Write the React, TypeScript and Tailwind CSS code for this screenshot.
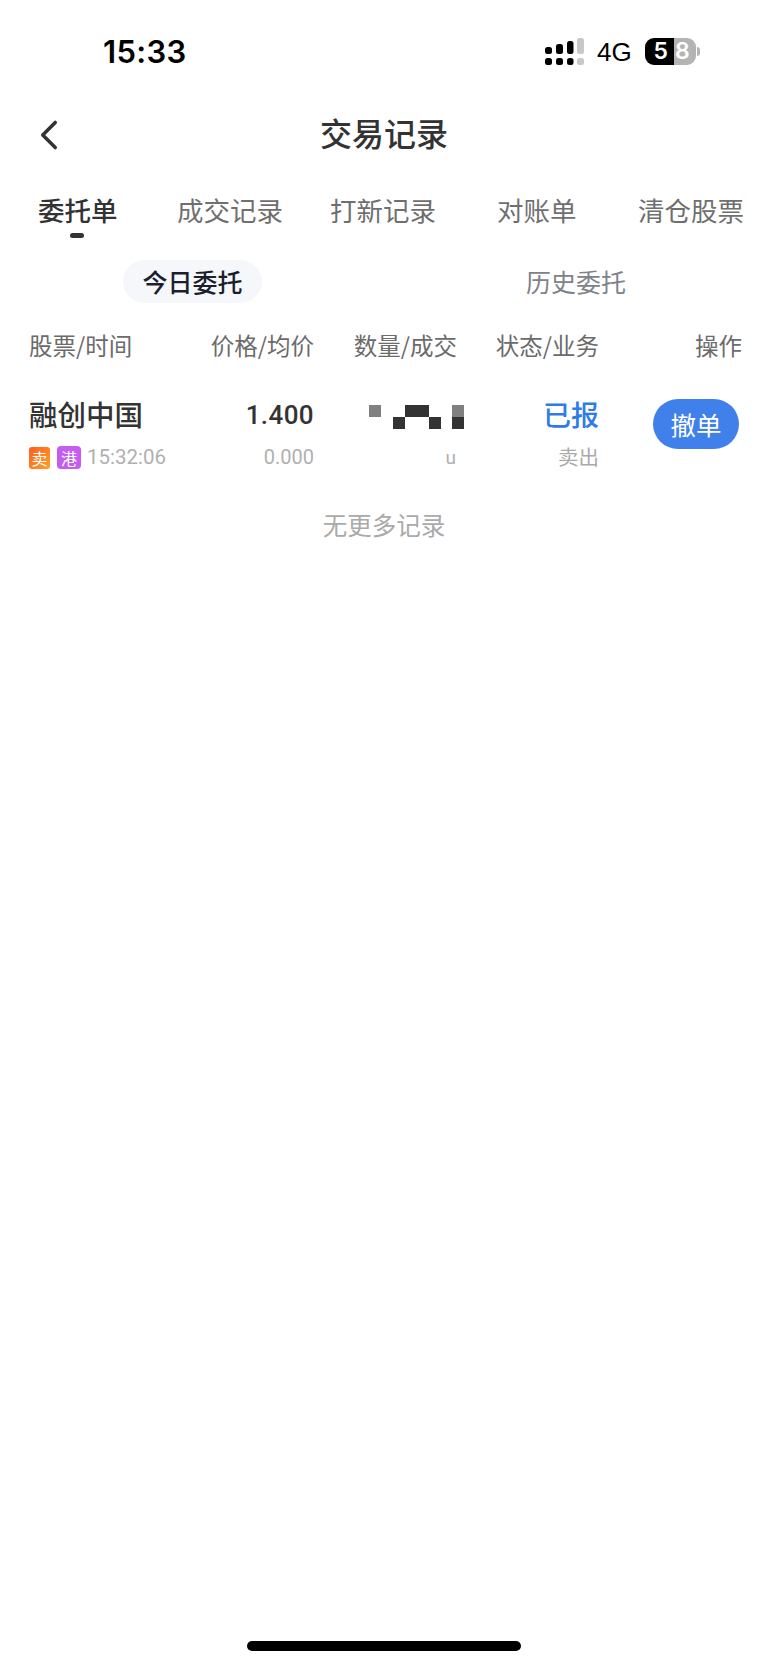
import { ChevronLeft } from "lucide-react";

const tabs = [
  { label: "委托单", className: "ml-[38px] w-[78px] text-[#333333] font-medium" },
  { label: "成交记录", className: "ml-[61px] w-[107px]" },
  { label: "打新记录", className: "ml-[46px] w-[107px]" },
  { label: "对账单", className: "ml-[60px] w-[80px]" },
  { label: "清仓股票", className: "ml-[61px] w-[107px]" },
];

const columns = ["价格/均价", "数量/成交", "状态/业务", "操作"];

function SignalIcon() {
  return (
    <svg width="39" height="27" viewBox="0 0 39 27">
      <rect x="0" y="9" width="7" height="7" rx="2.5" fill="#000" />
      <rect x="11" y="6" width="7" height="10" rx="2.5" fill="#000" />
      <rect x="22" y="3" width="6.5" height="13" rx="2.5" fill="#000" />
      <rect x="32" y="0" width="7" height="16" rx="2.5" fill="#c8c8c8" />
      <rect x="0" y="20" width="7" height="7" rx="2.5" fill="#000" />
      <rect x="11" y="20" width="7" height="7" rx="2.5" fill="#000" />
      <rect x="22" y="20" width="6.5" height="7" rx="2.5" fill="#000" />
      <rect x="32" y="20" width="7" height="7" rx="2.5" fill="#c8c8c8" />
    </svg>
  );
}

// pixelated quantity, it's blurred out in the original
function Mosaic() {
  return (
    <svg width="95" height="24" viewBox="0 0 95 24">
      <rect x="0" y="0" width="12" height="12" fill="#808080" />
      <rect x="36" y="0" width="24" height="12" fill="#333333" />
      <rect x="24" y="12" width="12" height="12" fill="#333333" />
      <rect x="60" y="12" width="12" height="12" fill="#333333" />
      <rect x="83" y="0" width="12" height="12" fill="#808080" />
      <rect x="83" y="12" width="12" height="12" fill="#333333" />
    </svg>
  );
}

export default function App() {
  return (
    <div className="relative flex h-[1665px] w-[768px] flex-col overflow-hidden bg-white font-['Noto_Sans_CJK_SC',sans-serif]">
      {/* Status bar */}
      <div className="flex h-[27px] mt-[38px] items-center">
        <span className="ml-[103px] font-['Inter',sans-serif] text-[31px] tracking-[0.3px] leading-none font-semibold text-black">
          15:33
        </span>
        <div className="ml-auto mr-[68px] flex items-center">
          <SignalIcon />
          <span className="ml-[13px] w-[35px] font-['Liberation_Sans',sans-serif] text-[26px] leading-none text-black">
            4G
          </span>
          <div className="ml-[13px] flex h-[27px] w-[51px] overflow-hidden rounded-[9px] font-['Inter',sans-serif] text-[23px] font-semibold text-white">
            <span className="flex w-[29px] items-center justify-end bg-black pr-[6px]">5</span>
            <span className="flex w-[22px] items-center bg-[#b4b4b4] pl-[1px]">8</span>
          </div>
          <div className="ml-[1px] h-[9px] w-[3px] rounded-r-full bg-[#b4b4b4]" />
        </div>
      </div>

      {/* Header */}
      <div className="relative mt-[50px] flex h-[40px] items-center justify-center">
        <ChevronLeft size={50} strokeWidth={1.7} className="absolute left-[24px] text-[#333333]" />
        <h1 className="pb-[6px] text-[32px] leading-none font-medium text-[#333333]">交易记录</h1>
      </div>

      {/* Tabs */}
      <div className="mt-[35px] flex h-[40px] items-center text-[26.5px] leading-none whitespace-nowrap text-[#6f6f6f]">
        {tabs.map((tab) => (
          <span key={tab.label} className={tab.className}>
            {tab.label}
          </span>
        ))}
      </div>
      <div className="ml-[70px] mt-[3px] h-[5px] w-[14px] rounded-full bg-[#333333]" />

      {/* Today / history */}
      <div className="mt-[22px] flex h-[43px] items-center text-[25px] leading-none">
        <div className="ml-[123px] flex h-[43px] w-[139px] items-center justify-center rounded-full bg-[#f5f7fa] font-medium text-[#1a1f2e]">
          今日委托
        </div>
        <span className="ml-[264px] text-[#80828a]">历史委托</span>
      </div>

      {/* Table head */}
      <div className="mt-[24px] grid h-[38px] grid-cols-[151px_134px_143px_142px_143px] items-center pl-[29px] text-right text-[23.5px] leading-none text-[#6b6b6b]">
        <span className="text-left">股票/时间</span>
        {columns.map((col) => (
          <span key={col}>{col}</span>
        ))}
      </div>

      {/* Order row */}
      <div className="mt-[34px] grid h-[71px] grid-cols-[151px_134px_143px_142px_142px] pl-[29px] text-right">
        <div className="flex flex-col justify-between pb-[1px] text-left">
          <span className="text-[28.5px] leading-[30px] font-medium text-[#333333]">融创中国</span>
          <div className="flex items-center">
            <span className="flex h-[22px] w-[21px] items-center justify-center rounded-[3px] bg-gradient-to-br from-[#ff5a1f] to-[#ffa024] text-[16px] leading-none text-white">
              卖
            </span>
            <span className="ml-[7px] flex h-[23px] w-[24px] items-center justify-center rounded-[4px] bg-[#c55cf0] text-[16px] leading-none text-white">
              港
            </span>
            <span className="ml-[6px] font-['Roboto',sans-serif] text-[20.5px] leading-none text-[#b0b0b0]">
              15:32:06
            </span>
          </div>
        </div>
        <div className="flex flex-col justify-between font-['Roboto',sans-serif]">
          <span className="text-[26px] leading-[32px] tracking-[0.4px] font-medium text-[#333333]">1.400</span>
          <span className="text-[20px] leading-[25px] text-[#b0b0b0]">0.000</span>
        </div>
        <div className="flex flex-col items-end justify-between pt-[6px]">
          <div className="-mr-[7px]">
            <Mosaic />
          </div>
          <span className="mr-[1px] font-['Roboto',sans-serif] text-[19px] leading-[25px] text-[#b0b0b0]">u</span>
        </div>
        <div className="flex flex-col justify-between">
          <span className="text-[28px] leading-[30px] font-medium text-[#2f7bea]">已报</span>
          <span className="text-[20.5px] leading-[28px] text-[#aaaaaa]">卖出</span>
        </div>
        <div className="flex justify-end">
          <button className="mr-[2px] h-[50px] w-[86px] rounded-full bg-[#3f80ea] text-[25.5px] leading-none text-white">
            撤单
          </button>
        </div>
      </div>

      <p className="mt-[40px] text-center text-[24.5px] leading-[30px] text-[#aaaaaa]">无更多记录</p>

      {/* Home indicator */}
      <div className="absolute bottom-[14px] left-[247px] h-[10px] w-[274px] rounded-full bg-black" />
    </div>
  );
}
